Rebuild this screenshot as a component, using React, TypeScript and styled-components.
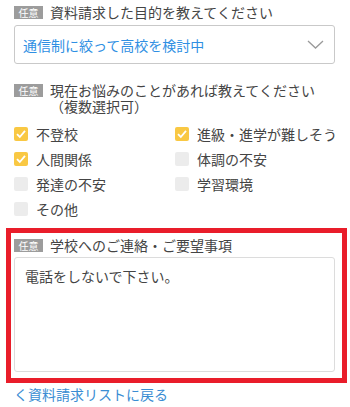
import styled, { createGlobalStyle } from 'styled-components';

const GlobalStyle = createGlobalStyle`
  html, body {
    margin: 0;
    padding: 0;
    background: #ffffff;
  }
  body {
    font-family: 'Noto Sans CJK JP', 'Noto Sans', sans-serif;
    color: #444444;
  }
`;

const concerns = [
  { label: '不登校', checked: true },
  { label: '進級・進学が難しそう', checked: true },
  { label: '人間関係', checked: true },
  { label: '体調の不安', checked: false },
  { label: '発達の不安', checked: false },
  { label: '学習環境', checked: false },
  { label: 'その他', checked: false },
];

const App = () => {
  return (
    <>
      <GlobalStyle />
      <Page>
        <Field>
          <FieldHeader>
            <Badge>任意</Badge>
            <FieldTitle>資料請求した目的を教えてください</FieldTitle>
          </FieldHeader>
          <Select>
            <span>通信制に絞って高校を検討中</span>
            <svg width="17" height="9" viewBox="0 0 17 9" fill="none">
              <path d="M1 1L8.5 8L16 1" stroke="#9a9a9a" strokeWidth="1.3" />
            </svg>
          </Select>
        </Field>

        <Field $gap={18}>
          <FieldHeader>
            <Badge>任意</Badge>
            <FieldTitle>
              現在お悩みのことがあれば教えてください
              <br />
              （複数選択可）
            </FieldTitle>
          </FieldHeader>
          <CheckGrid>
            {concerns.map((c) => (
              <CheckItem key={c.label}>
                <CheckBox $checked={c.checked}>
                  {c.checked && (
                    <svg width="14" height="14" viewBox="0 0 14 14" fill="none">
                      <path d="M3 7.2L5.8 10L11 3.8" stroke="#ffffff" strokeWidth="1.8" />
                    </svg>
                  )}
                </CheckBox>
                <span>{c.label}</span>
              </CheckItem>
            ))}
          </CheckGrid>
        </Field>

        <Highlight>
          <FieldHeader>
            <Badge>任意</Badge>
            <FieldTitle>学校へのご連絡・ご要望事項</FieldTitle>
          </FieldHeader>
          <TextArea>電話をしないで下さい。</TextArea>
        </Highlight>

        <BackLink href="#">く資料請求リストに戻る</BackLink>
      </Page>
    </>
  );
};

export default App;

const Page = styled.div`
  width: 350px;
  height: 407px;
  box-sizing: border-box;
  padding: 4px 15px 0 14px;
  overflow: hidden;
`;

const Field = styled.div<{ $gap?: number }>`
  margin-top: ${(p) => p.$gap ?? 0}px;
`;

const FieldHeader = styled.div`
  display: flex;
  align-items: flex-start;
  gap: 7px;
`;

const Badge = styled.span`
  flex: none;
  width: 29px;
  height: 13px;
  margin-top: 1.5px;
  background: #9c9c9c;
  color: #ffffff;
  font-size: 10px;
  line-height: 13px;
  text-align: center;
`;

const FieldTitle = styled.div`
  font-size: 14px;
  line-height: 16px;
  color: #444444;
`;

const Select = styled.div`
  margin-top: 5px;
  height: 39px;
  box-sizing: border-box;
  border: 1px solid #c9c9c9;
  border-radius: 3px;
  display: flex;
  align-items: center;
  justify-content: space-between;
  padding: 0 10px 0 8px;
  color: #2f8fe3;
  font-size: 14px;
`;

const CheckGrid = styled.div`
  margin-top: 8px;
  display: grid;
  grid-template-columns: 161px 1fr;
  grid-auto-rows: 24.8px;
`;

const CheckItem = styled.div`
  display: flex;
  align-items: center;
  gap: 8px;
  font-size: 14px;
  color: #444444;
  white-space: nowrap;
`;

const CheckBox = styled.span<{ $checked: boolean }>`
  flex: none;
  width: 14px;
  height: 14px;
  border-radius: 2px;
  background: ${(p) => (p.$checked ? '#f9c843' : '#ececec')};
  display: flex;
  svg {
    display: block;
  }
`;

const Highlight = styled.div`
  position: relative;
  margin-top: 16px;

  &::after {
    content: '';
    position: absolute;
    top: -9px;
    left: -8px;
    right: -12px;
    bottom: -11px;
    border: 5px solid #e91d2a;
    pointer-events: none;
  }
`;

const TextArea = styled.div`
  margin-top: 4px;
  height: 115px;
  box-sizing: border-box;
  border: 1.5px solid #dcdcdc;
  border-radius: 3px;
  padding: 10px 10px;
  font-size: 14px;
  line-height: 16px;
  color: #444444;
`;

const BackLink = styled.a`
  display: block;
  margin-top: 14px;
  font-size: 14px;
  line-height: 16px;
  color: #3a8dd3;
  text-decoration: none;
`;
